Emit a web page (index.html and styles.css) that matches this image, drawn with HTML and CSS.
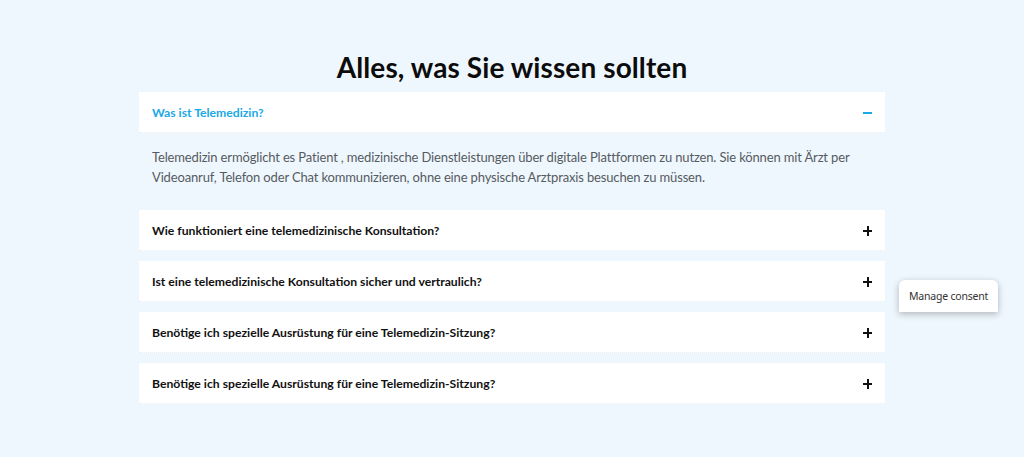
FILE: index.html
```html
<!DOCTYPE html>
<html lang="de">
<head>
<meta charset="utf-8">
<title>FAQ</title>
<link rel="stylesheet" href="styles.css">
</head>
<body>
<main class="faq">
  <h2 class="faq-title">Alles, was Sie wissen sollten</h2>
  <div class="faq-list">
    <div class="item open">
      <div class="q"><span>Was ist Telemedizin?</span><span class="icon minus"></span></div>
      <div class="a">Telemedizin ermöglicht es Patient , medizinische Dienstleistungen über digitale Plattformen zu nutzen. Sie können mit Ärzt per Videoanruf, Telefon oder Chat kommunizieren, ohne eine physische Arztpraxis besuchen zu müssen.</div>
    </div>
    <div class="item">
      <div class="q"><span>Wie funktioniert eine telemedizinische Konsultation?</span><span class="icon plus"></span></div>
    </div>
    <div class="item">
      <div class="q"><span>Ist eine telemedizinische Konsultation sicher und vertraulich?</span><span class="icon plus"></span></div>
    </div>
    <div class="item">
      <div class="q"><span>Benötige ich spezielle Ausrüstung für eine Telemedizin-Sitzung?</span><span class="icon plus"></span></div>
    </div>
    <div class="item">
      <div class="q"><span>Benötige ich spezielle Ausrüstung für eine Telemedizin-Sitzung?</span><span class="icon plus"></span></div>
    </div>
  </div>
</main>
<div class="consent">Manage consent</div>
</body>
</html>
```
FILE: styles.css
```css
html, body {
  margin: 0;
  padding: 0;
  background: #eff7fe;
}
body {
  width: 1024px;
  height: 457px;
  overflow: hidden;
  font-family: "Lato", "Noto Sans", sans-serif;
}
.faq {
  width: 746px;
  margin: 0 auto;
  padding-top: 50px;
}
.faq-title {
  margin: 0;
  text-align: center;
  font-size: 28px;
  line-height: 34px;
  font-weight: 700;
  color: #0c0c0c;
  height: 42px;
  letter-spacing: 0.1px;
}
.faq-list {
  display: flex;
  flex-direction: column;
  gap: 10px;
}
.item .q {
  background: #fff;
  height: 41px;
  box-sizing: border-box;
  padding: 0 13px;
  display: flex;
  align-items: center;
  justify-content: space-between;
  font-size: 12.2px;
  font-weight: 700;
  color: #111;
  border-bottom: 1px dotted #e9eef3;
}
.item.open .q {
  color: #1aa8e6;
}
.a {
  padding: 14px 13px 13px;
  font-size: 13px;
  line-height: 20px;
  color: #555b61;
  letter-spacing: -0.15px;
}
.icon {
  position: relative;
  width: 9px;
  height: 9px;
}
.icon::before, .icon::after {
  content: "";
  position: absolute;
  background: #111;
}
.icon::before {
  left: 0;
  top: 4px;
  width: 9px;
  height: 2px;
}
.plus::after {
  left: 4px;
  top: 0;
  width: 2px;
  height: 10px;
}
.minus::before {
  background: #1aa8e6;
}
.minus::after {
  display: none;
}
.consent {
  position: absolute;
  left: 899px;
  top: 280px;
  width: 99px;
  height: 32px;
  box-sizing: border-box;
  background: #fff;
  border-radius: 6px 6px 0 0;
  box-shadow: 0 2px 7px rgba(0,0,0,0.28);
  font-family: "Noto Sans", "Open Sans", sans-serif;
  font-size: 10.5px;
  letter-spacing: -0.2px;
  color: #333;
  display: flex;
  align-items: center;
  justify-content: center;
}
```
